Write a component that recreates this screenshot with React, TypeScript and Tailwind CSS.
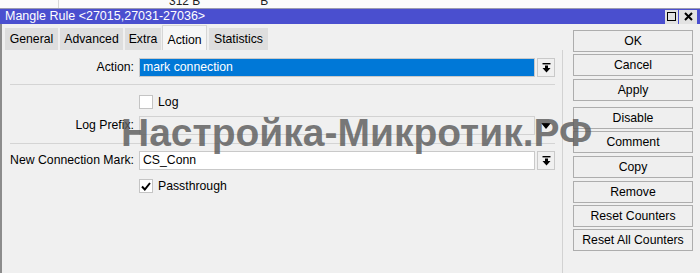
import React from "react";

function DropIcon() {
  return (
    <svg width="9" height="10" viewBox="0 0 9 10">
      <rect x="0.5" y="0" width="8" height="1.4" fill="#000" />
      <rect x="3" y="2.5" width="3" height="3" fill="#000" />
      <polygon points="0.5,5 8.5,5 4.5,9.5" fill="#000" />
    </svg>
  );
}

function Btn({ label, mt }: { label: string; mt: string }) {
  return (
    <div
      className={`${mt} h-[22px] w-[120px] border border-[#adadad] bg-[#efefef] flex items-center justify-center text-black`}
    >
      {label}
    </div>
  );
}

export default function App() {
  const tabs = [
    { t: "General", w: "w-[53px]", ml: "ml-0" },
    { t: "Advanced", w: "w-[63px]", ml: "ml-[2px]" },
    { t: "Extra", w: "w-[36px]", ml: "ml-[2px]" },
  ];
  return (
    <div
      className="relative w-[700px] h-[273px] overflow-hidden bg-[#f0f0f0] text-[12.25px] text-black"
      style={{ fontFamily: '"Liberation Sans", Arial, sans-serif' }}
    >
      {/* background table strip */}
      <div className="h-[8px] bg-[#fbfbfb] overflow-hidden flex relative">
        <div className="w-[59px] border-r border-[#d8d8d8]" />
        <div className="ml-[110px] -mt-[5px] leading-[12px] text-[12px] text-[#222]">312 B</div>
        <div className="ml-[60px] -mt-[5px] leading-[12px] text-[12px] text-[#222]">B</div>
      </div>

      {/* title bar */}
      <div className="h-[16px] bg-[#4a4fcf] border-t border-[#9a9ab0] flex items-center">
        <div className="pl-[5px] text-white leading-none text-[12.5px]">Mangle Rule &lt;27015,27031-27036&gt;</div>
        <div className="ml-auto flex items-center h-full pr-[3px]">
          <div className="w-[13px] h-[14px] bg-[#e2e2e2] flex items-center justify-center">
            <div className="w-[9px] h-[9px] border border-black" />
          </div>
          <div className="ml-[1px] w-[18px] h-[14px] bg-[#e2e2e2] flex items-center justify-center">
            <svg width="9" height="9" viewBox="0 0 9 9">
              <path d="M1 1 L8 8 M8 1 L1 8" stroke="#000" strokeWidth="2" />
            </svg>
          </div>
        </div>
      </div>

      {/* window body */}
      <div className="flex h-[249px] border-l-2 border-[#8c8c8c] bg-[#f0f0f0]">
        {/* left */}
        <div className="w-[561px] flex flex-col">
          <div className="h-[26px] pt-[1px] pl-[3px] flex items-end">
            {tabs.map((tb) => (
              <div
                key={tb.t}
                className={`${tb.ml} ${tb.w} h-[22px] bg-[#dedede] flex items-center justify-center`}
              >
                {tb.t}
              </div>
            ))}
            <div className="ml-[1px] w-[45px] h-[25px] bg-[#f6f6f6] border border-b-0 border-[#d6d6d6] flex items-start justify-center pt-[5px]">
              Action
            </div>
            <div className="ml-[2px] w-[59px] h-[22px] bg-[#dedede] flex items-center justify-center">
              Statistics
            </div>
          </div>

          <div className="flex-1 border-r border-[#d2d2d2] flex flex-col pt-[8px]">
            {/* Action */}
            <div className="flex items-center h-[19px]">
              <div className="w-[132px] text-right">Action:</div>
              <div className="ml-[5px] w-[396px] h-[19px] border border-[#c9c9c9] bg-[#0078d7] text-white flex items-center pl-[3px]">
                mark connection
              </div>
              <div className="ml-[2px] w-[18px] h-[19px] border border-[#c9c9c9] bg-[#f0f0f0] flex items-center justify-center">
                <DropIcon />
              </div>
            </div>

            <div className="mt-[7px] ml-[8px] w-[545px] h-[1px] bg-[#d4d4d4]" />

            {/* Log */}
            <div className="mt-[10px] ml-[137px] flex items-center h-[14px]">
              <div className="w-[14px] h-[14px] border border-[#c4c4c4] bg-white" />
              <div className="ml-[5px]">Log</div>
            </div>

            {/* Log Prefix */}
            <div className="mt-[7px] flex items-center h-[19px]">
              <div className="w-[132px] text-right">Log Prefix:</div>
              <div className="ml-[5px] w-[396px] h-[19px] border border-[#d2d2d2] bg-[#f0f0f0]" />
              <div className="ml-[2px] w-[18px] h-[19px] flex items-center justify-center">
                <svg width="10" height="6" viewBox="0 0 10 6">
                  <polygon points="0,0 10,0 5,6" fill="#000" />
                </svg>
              </div>
            </div>

            <div className="mt-[8px] ml-[8px] w-[545px] h-[1px] bg-[#d4d4d4]" />

            {/* New Connection Mark */}
            <div className="mt-[7px] flex items-center h-[19px]">
              <div className="w-[132px] text-right">New Connection Mark:</div>
              <div className="ml-[5px] w-[396px] h-[19px] border border-[#c9c9c9] bg-white flex items-center pl-[3px]">
                CS_Conn
              </div>
              <div className="ml-[2px] w-[18px] h-[19px] border border-[#c9c9c9] bg-[#f0f0f0] flex items-center justify-center">
                <DropIcon />
              </div>
            </div>

            {/* Passthrough */}
            <div className="mt-[9px] ml-[137px] flex items-center h-[14px]">
              <div className="w-[14px] h-[14px] border border-[#c4c4c4] bg-white flex items-center justify-center">
                <svg width="10" height="9" viewBox="0 0 10 9">
                  <path d="M1 4.5 L3.8 7.5 L9 1" stroke="#000" strokeWidth="2" fill="none" />
                </svg>
              </div>
              <div className="ml-[5px]">Passthrough</div>
            </div>
          </div>
        </div>

        {/* buttons */}
        <div className="pl-[10px] pt-[6px] flex flex-col">
          <Btn label="OK" mt="mt-0" />
          <Btn label="Cancel" mt="mt-[2px]" />
          <Btn label="Apply" mt="mt-[3px]" />
          <Btn label="Disable" mt="mt-[6px]" />
          <Btn label="Comment" mt="mt-[2px]" />
          <Btn label="Copy" mt="mt-[3px]" />
          <Btn label="Remove" mt="mt-[3px]" />
          <Btn label="Reset Counters" mt="mt-[2px]" />
          <Btn label="Reset All Counters" mt="mt-[2px]" />
        </div>
      </div>

      {/* watermark */}
      <div
        className="absolute left-[121px] top-[113px] text-[39px] leading-[39px] font-bold text-[rgba(92,92,92,0.82)] whitespace-nowrap pointer-events-none"
      >
        Настройка-Микротик.РФ
      </div>
    </div>
  );
}
